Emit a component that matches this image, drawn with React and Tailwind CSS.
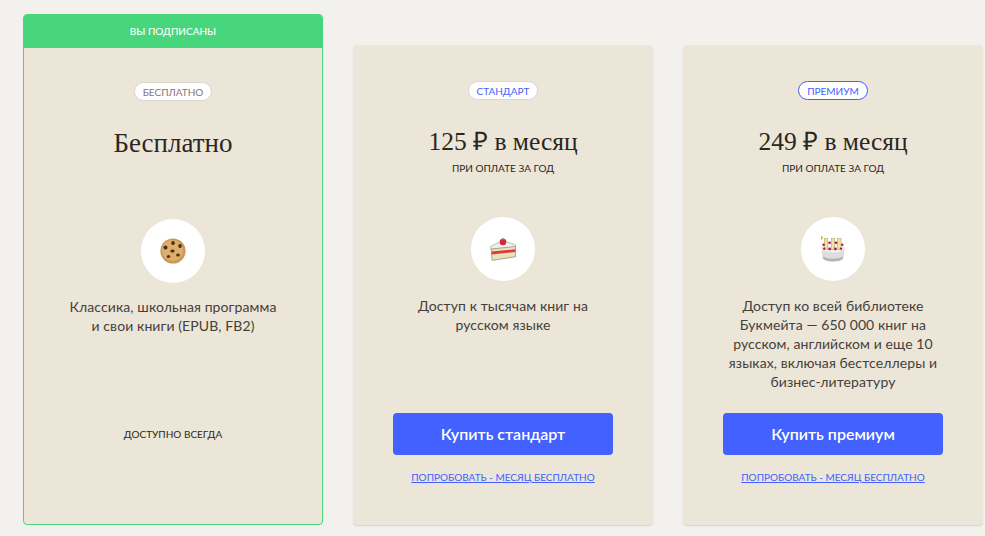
import React from 'react';

function Cookie() {
  return (
    <svg width="26" height="26" viewBox="0 0 26 26">
      <circle cx="13" cy="13" r="12.6" fill="#c9975a" />
      <circle cx="12.5" cy="12.5" r="10.6" fill="#dcaf6c" />
      <ellipse cx="5.5" cy="9.5" rx="2" ry="1.9" fill="#4a2a1a" />
      <ellipse cx="13" cy="5" rx="1.8" ry="1.9" fill="#4a2a1a" />
      <ellipse cx="20" cy="8" rx="1.8" ry="1.9" fill="#4a2a1a" />
      <ellipse cx="12.5" cy="13" rx="2.1" ry="1.5" fill="#4a2a1a" />
      <ellipse cx="18" cy="17" rx="2" ry="1.5" fill="#5a3320" />
      <ellipse cx="8.5" cy="18.5" rx="1.8" ry="1.5" fill="#5a3320" />
    </svg>
  );
}

function CakeSlice() {
  return (
    <svg width="26" height="23" viewBox="0 0 26 23">
      <path d="M0.5 8.5 L13 2.5 L25.5 7 L25.5 9 L1 11.5 Z" fill="#f0f0ee" stroke="#a3a397" strokeWidth="0.7" />
      <path d="M1.2 11 L25.5 8.5 L25.5 18.8 L2 22.4 Z" fill="#ebe2bd" stroke="#98957c" strokeWidth="0.8" />
      <path d="M1.6 13.6 L25.2 11.2 L25.2 14 L1.6 16.4 Z" fill="#dc3b3b" />
      <circle cx="13" cy="4" r="3.3" fill="#d3283a" />
      <path d="M11 1.2 L13 0 L15 1.2 L13 2.2 Z" fill="#5d9b3a" />
    </svg>
  );
}

function Candle({ x }) {
  return (
    <g>
      <rect x={x} y="2.5" width="3.4" height="11" fill="#efe3a8" stroke="#b9a968" strokeWidth="0.6" />
      <ellipse cx={x + 1.7} cy="1.8" rx="1.6" ry="1.8" fill="#d6bd3f" />
    </g>
  );
}

function BirthdayCake() {
  return (
    <svg width="24" height="26" viewBox="0 0 24 26">
      <path d="M1 11 L23 11 L22 22 C21 26.4 3 26.4 2 22 Z" fill="#dededc" stroke="#c4c4c2" strokeWidth="0.5" />
      <ellipse cx="12" cy="11.5" rx="11" ry="5.5" fill="#f4f4f3" stroke="#d0d0ce" strokeWidth="0.5" />
      <path d="M2.4 20.5 C6 23.4 18 23.4 21.6 20.5 L22 22 C21 26.4 3 26.4 2 22 Z" fill="#b4b4b2" />
      <Candle x="3.3" />
      <Candle x="10.3" />
      <Candle x="16.6" />
      <circle cx="2.6" cy="8.8" r="1.2" fill="#b3173c" />
      <circle cx="8.6" cy="6.8" r="1.3" fill="#b3173c" />
      <circle cx="15" cy="6.8" r="1.3" fill="#b3173c" />
      <circle cx="21.2" cy="8.8" r="1.2" fill="#b3173c" />
      <circle cx="3.2" cy="12.6" r="1.2" fill="#b3173c" />
      <circle cx="8.6" cy="13" r="1.4" fill="#b3173c" />
      <circle cx="14.4" cy="13" r="1.4" fill="#b3173c" />
      <circle cx="20" cy="12.6" r="1.2" fill="#b3173c" />
    </svg>
  );
}

function Badge({ label, className }) {
  return (
    <span className={`flex h-[19px] items-center rounded-full bg-white px-2 text-[10px] leading-none ${className}`}>
      {label}
    </span>
  );
}

function Emoji({ children }) {
  return (
    <div className="flex h-[64px] w-[64px] shrink-0 items-center justify-center rounded-full bg-white">
      {children}
    </div>
  );
}

function PaidCard({ badge, badgeClass, price, icon, text, button }) {
  return (
    <div className="flex h-[480px] w-[300px] flex-col items-center rounded-[4px] bg-[#ebe6d7] pt-[36px] shadow-[0_1px_1px_rgba(0,0,0,0.12)]">
      <Badge label={badge} className={badgeClass} />
      <div className="flex h-[117px] flex-col items-center pt-[27px]">
        <h2 className="font-['Liberation_Serif',serif] text-[25.5px] leading-[30px] text-[#2b2622]">{price}</h2>
        <p className="mt-[4px] text-[10px] leading-[14px] text-[#2b2622]">ПРИ ОПЛАТЕ ЗА ГОД</p>
      </div>
      <Emoji>{icon}</Emoji>
      <p className="mt-[15px] h-[95px] w-[212px] text-center text-[14px] leading-[19px] tracking-[0.1px] text-[#45403b]">{text}</p>
      <button className="mt-[22px] h-[42px] w-[220px] rounded-[4px] bg-[#4261ff] text-[16px] font-semibold text-white">
        {button}
      </button>
      <a href="#" className="mt-[15px] text-[10px] leading-[14px] text-[#4261ff] underline">
        ПОПРОБОВАТЬ - МЕСЯЦ БЕСПЛАТНО
      </a>
    </div>
  );
}

export default function App() {
  return (
    <div className="flex h-[536px] items-end gap-[30px] overflow-hidden bg-[#f2f1ed] pb-[11px] pl-[23px] font-['Lato','Noto_Sans',sans-serif]">
      {/* Free plan, the current subscription */}
      <div className="flex h-[511px] w-[300px] flex-col items-center overflow-hidden rounded-[4px] border border-[#48d67c] bg-[#ebe6d7]">
        <div className="flex h-[33px] w-full shrink-0 items-center justify-center bg-[#48d67c] text-[10px] font-medium text-white">
          ВЫ ПОДПИСАНЫ
        </div>
        <div className="mt-[34px] flex">
          <Badge label="БЕСПЛАТНО" className="border border-[#d9d6cd] text-[#7d7a76]" />
        </div>
        <div className="flex h-[118px] flex-col items-center pt-[27px]">
          <h2 className="font-['Liberation_Serif',serif] text-[27px] leading-[30px] text-[#2b2622]">Бесплатно</h2>
        </div>
        <Emoji><Cookie /></Emoji>
        <p className="mt-[14px] w-[212px] text-center text-[14px] leading-[19px] tracking-[0.1px] text-[#45403b]">
          Классика, школьная программа и свои книги (EPUB, FB2)
        </p>
        <p className="mt-[92px] text-[10px] leading-[14px] text-[#2b2622]">ДОСТУПНО ВСЕГДА</p>
      </div>

      <PaidCard
        badge="СТАНДАРТ"
        badgeClass="border border-[#d5d6e6] text-[#4261ff]"
        price="125 ₽ в месяц"
        icon={<CakeSlice />}
        text="Доступ к тысячам книг на русском языке"
        button="Купить стандарт"
      />
      <PaidCard
        badge="ПРЕМИУМ"
        badgeClass="border border-[#4261ff] text-[#4261ff]"
        price="249 ₽ в месяц"
        icon={<BirthdayCake />}
        text="Доступ ко всей библиотеке Букмейта — 650 000 книг на русском, английском и еще 10 языках, включая бестселлеры и бизнес-литературу"
        button="Купить премиум"
      />
    </div>
  );
}
